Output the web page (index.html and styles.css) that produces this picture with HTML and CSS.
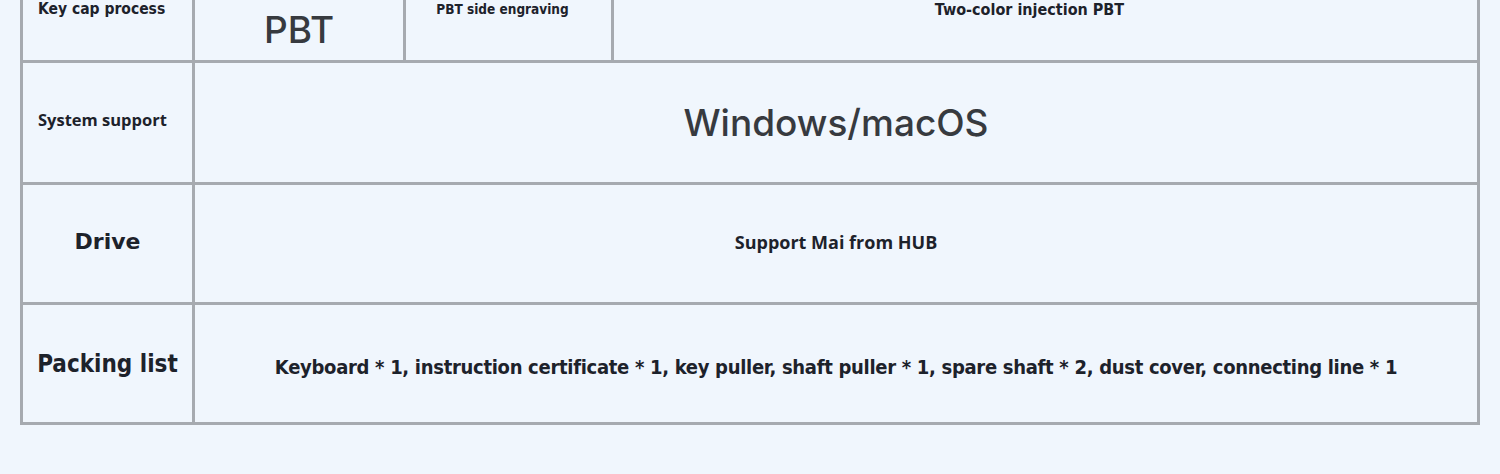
FILE: index.html
```html
<!DOCTYPE html>
<html lang="en">
<head>
    <meta charset="UTF-8">
    <meta name="viewport" content="width=device-width, initial-scale=1.0">
    <title>Keyboard specifications</title>
    <link rel="stylesheet" href="styles.css">
</head>
<body>
    <table class="spec-table">
        <colgroup>
            <col class="col-label">
            <col class="col-a">
            <col class="col-b">
            <col>
        </colgroup>
        <tr class="row-keycap">
            <th class="label narrow keycap">Key cap process</th>
            <td class="big pbt">PBT</td>
            <td class="narrow small">PBT side engraving</td>
            <td class="narrow mid">Two-color injection PBT</td>
        </tr>
        <tr class="row-system">
            <th class="label wide system">System support</th>
            <td class="big" colspan="3">Windows/macOS</td>
        </tr>
        <tr class="row-drive">
            <th class="label drive">Drive</th>
            <td class="wide value" colspan="3">Support Mai from HUB</td>
        </tr>
        <tr class="row-packing">
            <th class="label narrow packing">Packing list</th>
            <td class="narrow packing-value" colspan="3">Keyboard * 1, instruction certificate * 1, key puller, shaft puller * 1, spare shaft * 2, dust cover, connecting line * 1</td>
        </tr>
    </table>
</body>
</html>
```

FILE: styles.css
```css
body {
    margin: 0;
    background: #f0f6fd;
    color: #1d222b;
    font-family: "Open Sans", "Noto Sans", sans-serif;
    height: 474px;
    overflow: hidden;
}

.spec-table {
    margin: -61px 0 0 20px;
    width: 1460px;
    border-collapse: collapse;
    table-layout: fixed;
}

th,
td {
    border: 3px solid #a6aab0;
    text-align: center;
    vertical-align: middle;
    padding: 0;
}

.col-label { width: 172px; }
.col-a { width: 211px; }
.col-b { width: 208px; }

.row-keycap { height: 121px; }
.row-system { height: 122px; }
.row-drive { height: 120px; }
.row-packing { height: 120px; }

.narrow {
    font-family: "DejaVu Sans Condensed", "Open Sans", sans-serif;
    font-weight: 700;
}

.wide {
    font-family: "Open Sans", "Noto Sans", sans-serif;
    font-weight: 700;
}

.label {
    font-size: 16px;
}

.row-keycap th,
.row-keycap td {
    padding-top: 16px;
}

.row-keycap .pbt {
    padding-top: 56px;
}

.keycap {
    text-align: left;
    padding-left: 15px;
    font-size: 15.5px;
}

.system {
    text-align: left;
    padding-left: 15px;
    font-size: 16.5px;
    padding-bottom: 6px;
}

.drive {
    font-family: "DejaVu Sans", sans-serif;
    font-weight: 700;
    font-size: 22px;
    padding-bottom: 4px;
}

.big {
    font-family: Inter, "Noto Sans", sans-serif;
    font-weight: 500;
    font-size: 37px;
    color: #373a3f;
}

.small {
    font-size: 13.5px;
    padding-right: 12px;
}

.row-keycap .mid {
    font-size: 16px;
    padding-right: 32px;
}

.value {
    font-size: 18px;
    padding-bottom: 4px;
}

.packing {
    font-size: 24px;
}

.packing-value {
    font-size: 20px;
    letter-spacing: -0.3px;
    padding-top: 6px;
}
```
